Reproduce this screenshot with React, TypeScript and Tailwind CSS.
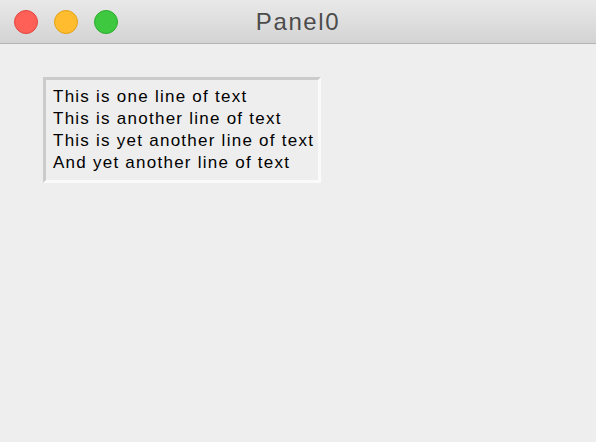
import React from 'react';

const lines = [
  'This is one line of text',
  'This is another line of text',
  'This is yet another line of text',
  'And yet another line of text',
];

const App: React.FC = () => {
  return (
    <div className="w-[596px] h-[442px] bg-[#eeeeee] flex flex-col overflow-hidden font-['Liberation_Sans',sans-serif]">
      {/* Title bar */}
      <div className="relative h-[44px] flex items-center bg-gradient-to-b from-[#e9e9e9] to-[#d3d3d3] border-b border-[#b4b4b4]">
        <div className="flex items-center gap-[16px] pl-[14px]">
          <span className="w-[24px] h-[24px] rounded-full bg-[#fe5f57] border border-[#e2463f]" />
          <span className="w-[24px] h-[24px] rounded-full bg-[#febc2e] border border-[#e1a116]" />
          <span className="w-[24px] h-[24px] rounded-full bg-[#3ec840] border border-[#2aac2c]" />
        </div>
        <div className="absolute inset-0 flex items-center justify-center text-[24px] tracking-[1.6px] text-[#4c4c4c] pointer-events-none">
          Panel0
        </div>
      </div>

      {/* Content */}
      <div className="pt-[33px] pl-[43px]">
        <div className="w-[278px] border-[3px] border-t-[#cbcbcb] border-l-[#cbcbcb] border-b-[#fafafa] border-r-[#fafafa] pt-[6px] pb-[6px] pl-[7px] text-[17px] tracking-[1.25px] leading-[22px] text-black whitespace-nowrap">
          {lines.map((line, i) => (
            <div key={i}>{line}</div>
          ))}
        </div>
      </div>
    </div>
  );
};

export default App;
